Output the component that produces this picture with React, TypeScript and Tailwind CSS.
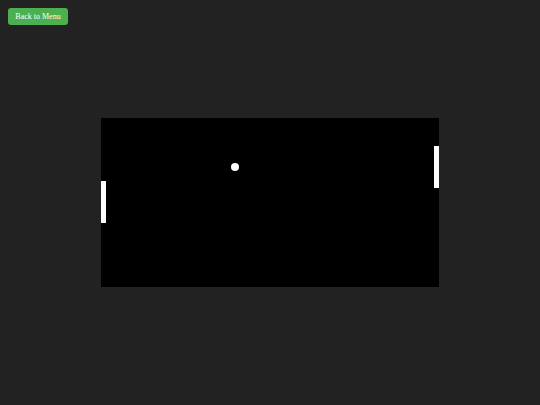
import React from "react";

export default function App() {
  return (
    <div className="relative w-[540px] h-[405px] bg-[#222222] flex items-center justify-center overflow-hidden">
      <button
        className="absolute left-[8px] top-[8px] w-[60px] h-[17px] rounded-[3px] bg-[#4caf50] text-white text-[8px] leading-none flex items-center justify-center"
        style={{ fontFamily: '"Liberation Serif", "DejaVu Serif", serif' }}
      >
        Back to Menu
      </button>
      <div className="relative w-[338px] h-[169px] bg-black">
        <div className="absolute left-0 top-[63px] w-[5px] h-[42px] bg-white" />
        <div className="absolute right-0 top-[28px] w-[5px] h-[42px] bg-white" />
        <div className="absolute left-[130px] top-[45px] w-[8px] h-[8px] rounded-full bg-white" />
      </div>
    </div>
  );
}
